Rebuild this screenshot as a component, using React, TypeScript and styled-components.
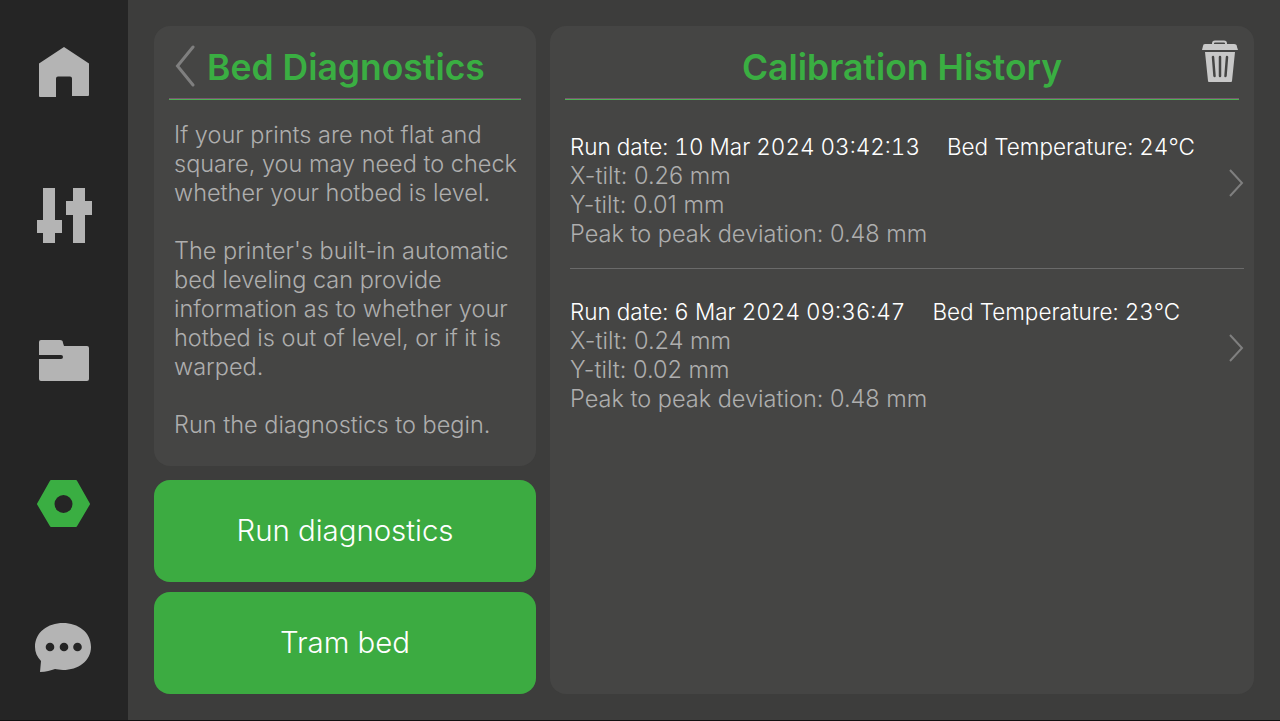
import React from "react";
import styled, { createGlobalStyle } from "styled-components";

const GlobalStyle = createGlobalStyle`
  html, body { margin: 0; padding: 0; background: #3d3d3c; }
  body { font-family: Inter, Roboto, sans-serif; }
`;

const Screen = styled.div`
  width: 1280px;
  height: 720px;
  display: flex;
  background: #3d3d3c;
  border-bottom: 1px solid #111;
`;

const Sidebar = styled.nav`
  width: 128px;
  height: 720px;
  background: #252525;
  display: grid;
  grid-template-rows: repeat(5, 1fr);
  justify-items: center;
  align-items: center;
  flex-shrink: 0;
`;

const NavIcon = styled.svg`
  width: 64px;
  height: 64px;
  display: block;
`;

const Main = styled.main`
  flex: 1;
  display: flex;
  gap: 14px;
  padding: 26px;
`;

const LeftColumn = styled.div`
  width: 382px;
  display: flex;
  flex-direction: column;
  gap: 10px;
`;

const Card = styled.section`
  background: #454544;
  border-radius: 16px;
`;

const InfoCard = styled(Card)`
  height: 440px;
  margin-bottom: 4px;
  padding: 0 15px;
  box-sizing: border-box;
`;

const HistoryCard = styled(Card)`
  flex: 1;
  padding: 0 15px;
  position: relative;
`;

const Header = styled.header<{ $center?: boolean }>`
  height: 74px;
  padding-top: 11px;
  display: flex;
  align-items: center;
  justify-content: ${(p) => (p.$center ? "center" : "flex-start")};
  gap: 12px;
  border-bottom: 1px solid #4db155;
  box-shadow: inset 0 -1px 0 #7a5570;
  box-sizing: border-box;
`;

const Title = styled.h1`
  margin: 0;
  color: #3aae42;
  font-size: 35.5px;
  font-weight: 600;
  line-height: 1;
`;

const Body = styled.p`
  margin: 20px 0 0;
  padding: 0 5px;
  color: #aeaeae;
  font-size: 23.5px;
  font-weight: 300;
  line-height: 29px;
  white-space: pre;
`;

const ActionButton = styled.button`
  height: 102px;
  border: none;
  border-radius: 16px;
  background: #3cab41;
  color: #fff;
  font-family: inherit;
  font-size: 29.4px;
  font-weight: 300;
  padding: 0 0 2px;
`;

const RunRow = styled.div<{ $last?: boolean }>`
  display: flex;
  align-items: flex-start;
  justify-content: space-between;
  margin: 0 -5px 0 5px;
  padding: 28px 0 0;
  height: 165px;
  box-sizing: border-box;
  border-bottom: ${(p) => (p.$last ? "none" : "1px solid #6a6a6a")};
  &:first-of-type {
    height: 169px;
    padding-top: 32px;
  }
`;

const RunText = styled.div`
  font-size: 23.5px;
  font-weight: 300;
  line-height: 29px;
  color: #aeaeae;
`;

const RunHead = styled.div`
  color: #fff;
  font-size: 22.5px;
  font-variant-numeric: tabular-nums;
  display: flex;
  gap: 27px;
`;

const TrashIcon = styled.svg`
  position: absolute;
  top: 14px;
  right: 16px;
  width: 36px;
  height: 43px;
`;

const BackChevron = styled.svg`
  width: 20px;
  height: 42px;
  margin-left: 6px;
  flex-shrink: 0;
  margin-top: -4px;
`;

const RowChevron = styled.svg`
  width: 16px;
  height: 30px;
  flex-shrink: 0;
  margin-top: 36px;
`;

const runs = [
  { date: "10 Mar 2024 03:42:13", temp: "24", x: "0.26", y: "0.01", p: "0.48" },
  { date: "6 Mar 2024 09:36:47", temp: "23", x: "0.24", y: "0.02", p: "0.48" },
];

export default function App() {
  return (
    <Screen>
      <GlobalStyle />
      <Sidebar>
        <NavIcon viewBox="0 0 64 64">
          <path fill="#b4b4b4" d="M32 7 L57 23.5 V55 a1 1 0 0 1 -1 1 H40 V38.5 a2 2 0 0 0 -2 -2 H26 a2 2 0 0 0 -2 2 V57 H8 a1 1 0 0 1 -1 -1 V23.5 Z" />
        </NavIcon>
        <NavIcon viewBox="0 0 64 64">
          <path fill="#b4b4b4" d="M11 4h12v32h7v13h-7v10H11V49H5V36h6zM41 4h12v13h7v14h-7v28H41V31h-7V17h7z" />
        </NavIcon>
        <NavIcon viewBox="0 0 64 64">
          <path fill="#b4b4b4" d="M7 14a2 2 0 0 1 2-2h19a3 3 0 0 1 3 3l1 3h23a2 2 0 0 1 2 2v31a2 2 0 0 1-2 2H9a2 2 0 0 1-2-2V31h22a2 2 0 0 0 2-2 2 2 0 0 0-2-2H7z" />
        </NavIcon>
        <NavIcon viewBox="0 0 64 64">
          <path fill="#3aae42" stroke="#3aae42" strokeWidth="2" strokeLinejoin="round" d="M19 9h25l13 23-13 22H19L6 32z" />
          <circle cx="31.500" cy="32" r="9" fill="#252525" />
        </NavIcon>
        <NavIcon viewBox="0 0 64 64">
          <path fill="#b4b4b4" d="M31 7c15 0 28 9 28 24 0 14-13 23-28 23-3 0-6-1-8-1-4 1-9 3-15 3l1-11C5 41 3 36 3 31 3 16 16 7 31 7z" />
          <circle cx="18" cy="31" r="4.300" fill="#252525" />
          <circle cx="32" cy="31" r="4.300" fill="#252525" />
          <circle cx="45.500" cy="31" r="4.300" fill="#252525" />
        </NavIcon>
      </Sidebar>
      <Main>
        <LeftColumn>
          <InfoCard>
            <Header>
              <BackChevron viewBox="0 0 20 42">
                <path d="M18 2 L2.500 21 L18 40" fill="none" stroke="#7f7f7f" strokeWidth="3" strokeLinecap="round" />
              </BackChevron>
              <Title>Bed Diagnostics</Title>
            </Header>
            <Body>{`If your prints are not flat and
square, you may need to check
whether your hotbed is level.

The printer's built-in automatic
bed leveling can provide
information as to whether your
hotbed is out of level, or if it is
warped.

Run the diagnostics to begin.`}</Body>
          </InfoCard>
          <ActionButton>Run diagnostics</ActionButton>
          <ActionButton>Tram bed</ActionButton>
        </LeftColumn>
        <HistoryCard>
          <Header $center>
            <Title>Calibration History</Title>
          </Header>
          <TrashIcon viewBox="0 0 36 43">
            <path fill="none" stroke="#c8c8c8" strokeWidth="2" d="M11 5V3.500a2 2 0 0 1 2-2h9a2 2 0 0 1 2 2V5" />
            <path fill="#c8c8c8" d="M3 4h29a3 3 0 0 1 3 3l1 3H0l1-4a2 2 0 0 1 2-2z" />
            <path fill="#c8c8c8" d="M3 12h30l-3 29a1 1 0 0 1-1 1H7a1 1 0 0 1-1-1z" />
            <path fill="none" stroke="#454544" strokeWidth="2.500" strokeLinecap="round" d="M11 17l1.500 19M18 17v19M25 17l-1.500 19" />
          </TrashIcon>
          {runs.map((r) => (
            <RunRow key={r.date} $last={r.temp === "23"}>
              <RunText>
                <RunHead>
                  <span>Run date: {r.date}</span>
                  <span>Bed Temperature: {r.temp}℃</span>
                </RunHead>
                <div>X-tilt: {r.x} mm</div>
                <div>Y-tilt: {r.y} mm</div>
                <div>Peak to peak deviation: {r.p} mm</div>
              </RunText>
              <RowChevron viewBox="0 0 16 30">
                <path d="M2 2 L14 15 L2 28" fill="none" stroke="#7f7f7f" strokeWidth="2" />
              </RowChevron>
            </RunRow>
          ))}
        </HistoryCard>
      </Main>
    </Screen>
  );
}
